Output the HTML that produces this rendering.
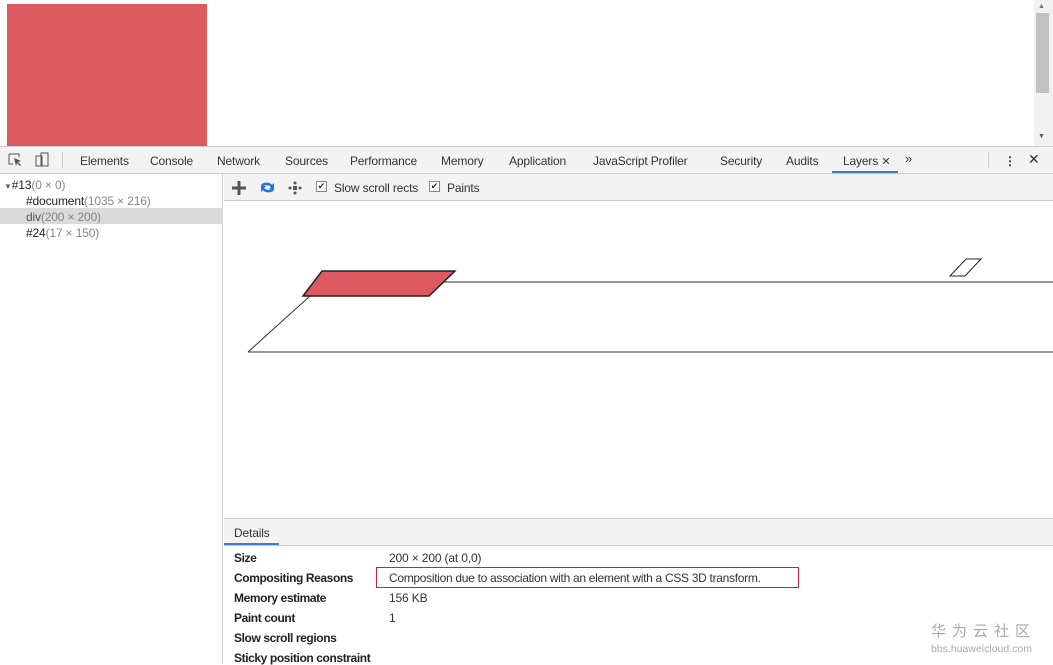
<!DOCTYPE html>
<html><head><style>
*{margin:0;padding:0;box-sizing:border-box}
body{width:1053px;height:664px;overflow:hidden;background:#fff;font-family:"Liberation Sans",sans-serif;font-size:12px;color:#333;position:relative;letter-spacing:-0.15px}
.a{position:absolute;white-space:nowrap}
.tab{position:absolute;top:154px;color:#333;font-size:12px}
.b{font-weight:bold;color:#222;letter-spacing:-0.4px}
</style></head><body>
<div class="a" style="left:7px;top:4px;width:200px;height:142px;background:#dc5a60"></div>
<div class="a" style="left:1034px;top:0;width:19px;height:146px;background:#f1f1f1"></div>
<div class="a" style="left:1036px;top:13px;width:13px;height:80px;background:#c1c1c1"></div>
<div class="a" style="left:1038px;top:3px;font-size:7px;color:#777">▲</div>
<div class="a" style="left:1038px;top:133px;font-size:7px;color:#555">▼</div>
<div class="a" style="left:0;top:146px;width:1053px;height:28px;background:#f3f3f3;border-top:1px solid #ccc;border-bottom:1px solid #ccc"></div>
<svg class="a" style="left:8px;top:152px" width="44" height="16"><path d="M1 2h10v3M1 2v10h4" stroke="#555" fill="none"/><path d="M6 6l7 3-3 1 3 3-1 1-3-3-1 3z" fill="#555"/><rect x="28" y="4" width="6" height="10" stroke="#555" fill="none"/><rect x="33" y="1" width="7" height="13" stroke="#555" fill="none"/></svg>
<div class="a" style="left:62px;top:152px;width:1px;height:16px;background:#ccc"></div>
<span class="tab" style="left:80px">Elements</span>
<span class="tab" style="left:150px">Console</span>
<span class="tab" style="left:217px">Network</span>
<span class="tab" style="left:285px">Sources</span>
<span class="tab" style="left:350px">Performance</span>
<span class="tab" style="left:441px">Memory</span>
<span class="tab" style="left:509px">Application</span>
<span class="tab" style="left:593px">JavaScript Profiler</span>
<span class="tab" style="left:720px">Security</span>
<span class="tab" style="left:786px">Audits</span>
<span class="tab" style="left:843px">Layers <span style="font-size:11px">✕</span></span>
<div class="a" style="left:832px;top:171px;width:66px;height:2px;background:#3879d9"></div>
<span class="tab" style="left:905px;font-size:13px;top:151px">»</span>
<div class="a" style="left:988px;top:152px;width:1px;height:16px;background:#ccc"></div>
<span class="tab" style="left:1004px;font-weight:bold">⋮</span>
<span class="tab" style="left:1028px;font-size:14px;top:151px">✕</span>
<div class="a" style="left:0;top:174px;width:223px;height:490px;background:#fff;border-right:1px solid #ccc"></div>
<div class="a" style="left:0;top:208px;width:223px;height:16px;background:#dadada"></div>
<div class="a" style="left:4px;top:178px;color:#222"><span style="font-size:8px;color:#666">▼</span>#13<span style="color:#888">(0 × 0)</span></div>
<div class="a" style="left:26px;top:194px;color:#222">#document<span style="color:#888">(1035 × 216)</span></div>
<div class="a" style="left:26px;top:210px;color:#555">div<span style="color:#888">(200 × 200)</span></div>
<div class="a" style="left:26px;top:226px;color:#222">#24<span style="color:#888">(17 × 150)</span></div>
<div class="a" style="left:224px;top:174px;width:829px;height:27px;background:#f3f3f3;border-bottom:1px solid #ccc"></div>
<svg class="a" style="left:231px;top:180px" width="80" height="16"><path d="M8 1v14M1 8h14" stroke="#555" stroke-width="3"/><path d="M30 5a6 4 0 0 1 11 0l2-2v6h-5l2-2a5 3 0 0 0-9 0zM43 10a6 4 0 0 1-11 0l-2 2v-6h5l-2 2a5 3 0 0 0 9 0z" fill="#1a73e8"/><g fill="#555"><circle cx="64" cy="3" r="1.5"/><circle cx="64" cy="13" r="1.5"/><circle cx="59" cy="8" r="1.5"/><circle cx="69" cy="8" r="1.5"/><rect x="62" y="6" width="4" height="4"/></g></svg>
<div class="a" style="left:316px;top:181px;width:11px;height:11px;border:1px solid #888;background:#fff;font-size:9px;line-height:9px;text-align:center">✔</div>
<span class="a" style="left:334px;top:181px">Slow scroll rects</span>
<div class="a" style="left:429px;top:181px;width:11px;height:11px;border:1px solid #888;background:#fff;font-size:9px;line-height:9px;text-align:center">✔</div>
<span class="a" style="left:447px;top:181px">Paints</span>
<svg class="a" style="left:224px;top:201px" width="829" height="317">
<path d="M24 151L86 95M24 151H829M220 81H829" stroke="#333" fill="none" stroke-width="1"/>
<path d="M79 95L98 70H231L205 95Z" fill="#dc5a60" stroke="#222" stroke-width="1.5"/>
<path d="M726 75L742 58H757L741 75Z" fill="#fff" stroke="#222"/>
</svg>
<div class="a" style="left:224px;top:518px;width:829px;height:28px;background:#f3f3f3;border-top:1px solid #ccc;border-bottom:1px solid #ccc"></div>
<span class="a" style="left:234px;top:526px;color:#333">Details</span>
<div class="a" style="left:224px;top:543px;width:55px;height:2px;background:#3879d9"></div>
<div class="a b" style="left:234px;top:551px">Size</div>
<div class="a b" style="left:234px;top:571px">Compositing Reasons</div>
<div class="a b" style="left:234px;top:591px">Memory estimate</div>
<div class="a b" style="left:234px;top:611px">Paint count</div>
<div class="a b" style="left:234px;top:631px">Slow scroll regions</div>
<div class="a b" style="left:234px;top:651px">Sticky position constraint</div>
<div class="a" style="left:389px;top:551px">200 × 200 (at 0,0)</div>
<div class="a" style="left:376px;top:567px;width:423px;height:21px;border:1px solid #c8272f"></div>
<div class="a" style="left:389px;top:571px;letter-spacing:-0.3px">Composition due to association with an element with a CSS 3D transform.</div>
<div class="a" style="left:389px;top:591px">156 KB</div>
<div class="a" style="left:389px;top:611px">1</div>
<div class="a" style="left:931px;top:622px;font-family:'Noto Sans CJK SC',sans-serif;font-size:15px;line-height:18px;color:#aaa;letter-spacing:6px">华为云社区</div>
<div class="a" style="left:931px;top:643px;font-size:10.5px;line-height:12px;color:#aaa;letter-spacing:0">bbs.huaweicloud.com</div>
</body></html>
